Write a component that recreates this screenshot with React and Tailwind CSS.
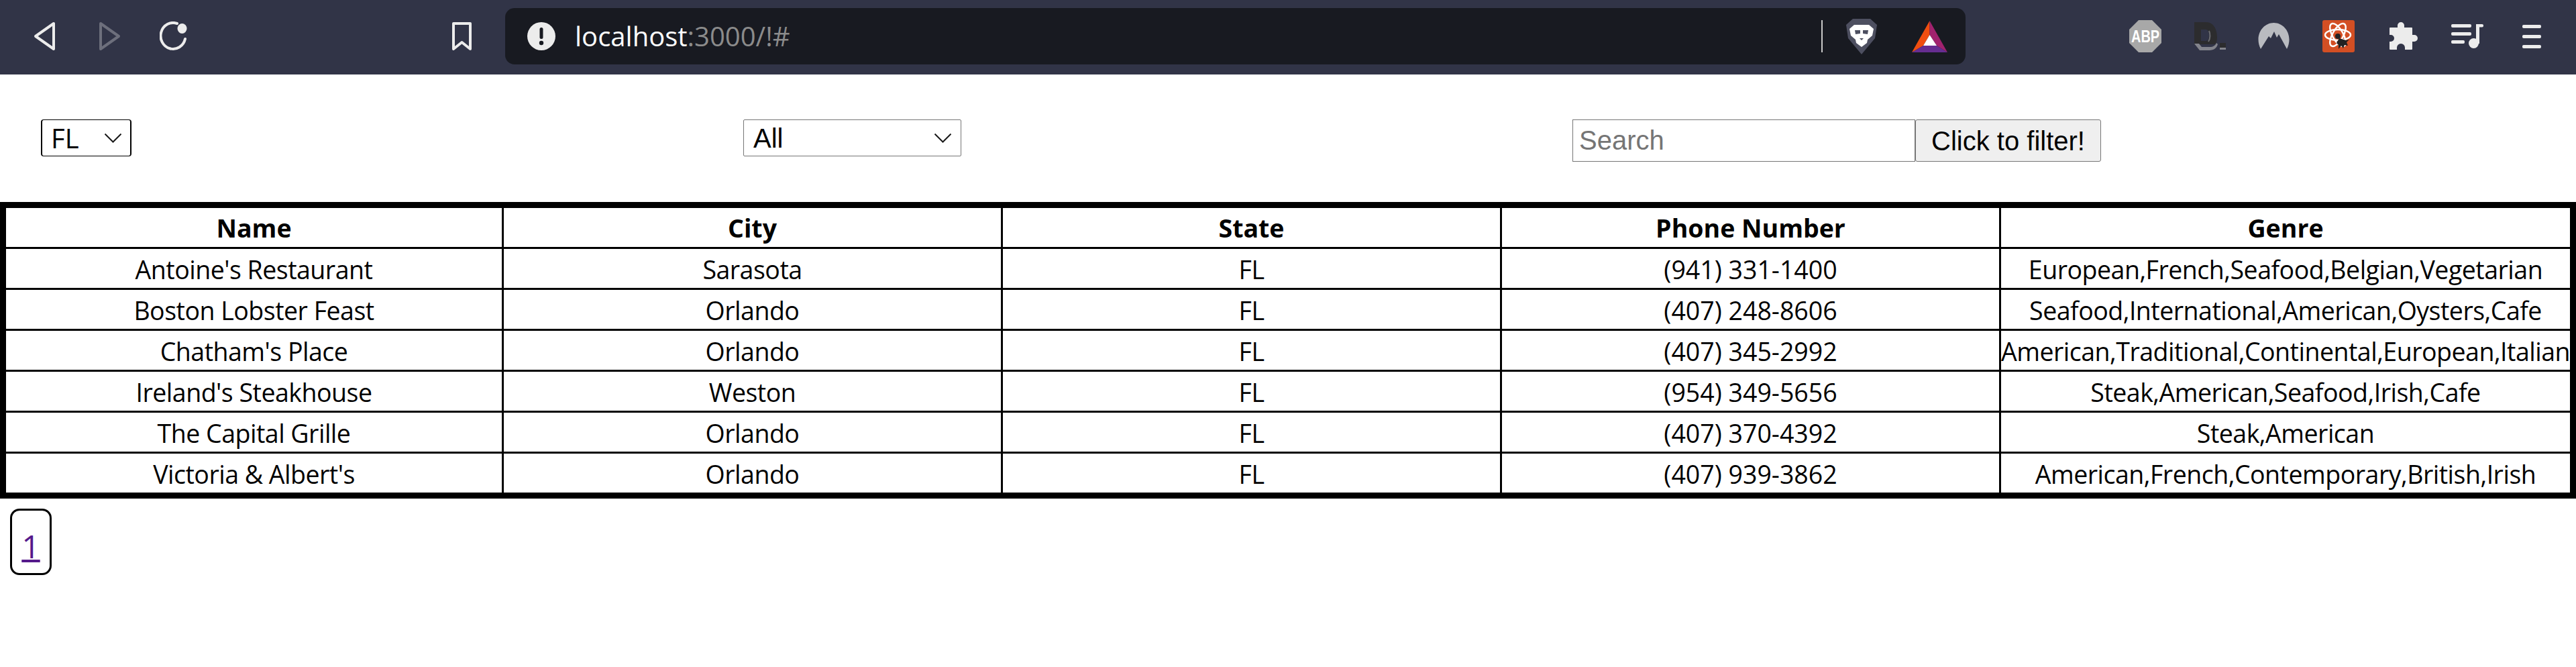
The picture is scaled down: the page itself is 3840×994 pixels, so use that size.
const restaurants = [
  ["Antoine's Restaurant", 'Sarasota', 'FL', '(941) 331-1400', 'European,French,Seafood,Belgian,Vegetarian'],
  ['Boston Lobster Feast', 'Orlando', 'FL', '(407) 248-8606', 'Seafood,International,American,Oysters,Cafe'],
  ["Chatham's Place", 'Orlando', 'FL', '(407) 345-2992', 'American,Traditional,Continental,European,Italian'],
  ["Ireland's Steakhouse", 'Weston', 'FL', '(954) 349-5656', 'Steak,American,Seafood,Irish,Cafe'],
  ['The Capital Grille', 'Orlando', 'FL', '(407) 370-4392', 'Steak,American'],
  ["Victoria & Albert's", 'Orlando', 'FL', '(407) 939-3862', 'American,French,Contemporary,British,Irish'],
];

const headers = ['Name', 'City', 'State', 'Phone Number', 'Genre'];

const colWidths = ['w-[742px]', 'w-[744px]', 'w-[744px]', 'w-[744px]', ''];

const Chevron = () => (
  <svg className="w-[25px] h-[14px]" viewBox="0 0 25 14" fill="none" stroke="#1a1a1a" strokeWidth="2">
    <path d="M0.5 0.5 L12.5 12.5 L24.5 0.5" />
  </svg>
);

const BrowserBar = () => (
  <div className="h-[111px] pb-[3px] bg-[#313447] flex items-center">
    <svg className="ml-[50px] w-[34px] h-[44px]" viewBox="0 0 34 44" fill="none" stroke="#ececec" strokeWidth="4" strokeLinejoin="round">
      <path d="M30 3 V41 L3 22 Z" />
    </svg>
    <svg className="ml-[62px] w-[34px] h-[44px]" viewBox="0 0 34 44" fill="none" stroke="#6d6f7c" strokeWidth="4" strokeLinejoin="round">
      <path d="M4 3 L31 22 L4 41 Z" />
    </svg>
    <svg className="ml-[58px] w-[44px] h-[44px]" viewBox="0 0 44 44" fill="none" stroke="#ececec" strokeWidth="4" strokeLinecap="round">
      <path d="M38 26 A18.5 19.5 0 1 1 26 3" />
      <ellipse cx="33.5" cy="10.5" rx="7" ry="7.5" fill="#ececec" stroke="none" />
    </svg>
    <svg className="ml-[391px] w-[31px] h-[44px]" viewBox="0 0 31 44" fill="none" stroke="#ececec" strokeWidth="4" strokeLinejoin="round">
      <path d="M3 3 H28 V41 L15.5 31 L3 41 Z" />
    </svg>

    <div className="ml-[49px] w-[2177px] h-[84px] bg-[#181a21] rounded-[14px] flex items-center">
      <svg className="ml-[33px] w-[42px] h-[42px]" viewBox="0 0 42 42">
        <circle cx="21" cy="21" r="21" fill="#ececec" />
        <rect x="18.5" y="8" width="5" height="17" rx="2.5" fill="#181a21" />
        <circle cx="21" cy="31" r="3.2" fill="#181a21" />
      </svg>
      <span className="ml-[29px] text-[40px] leading-none text-white font-['Open_Sans',sans-serif]">
        localhost<span className="text-[#8b8b8b]">:3000/!#</span>
      </span>

      <div className="ml-auto w-[2px] h-[48px] bg-[#c9c9c9]" />
      <svg className="ml-[35px] w-[46px] h-[54px]" viewBox="0 0 46 54">
        <path d="M10 1 H36 L46 10 L43 30 L23 54 L3 30 L0 10 Z" fill="#4d4f60" />
        <path d="M12 10 H34 L41 16 L39 26 L32 32 L31 37 L23 43 L15 37 L14 32 L7 26 L5 16 Z" fill="#fff" />
        <path d="M13 18 H21 V23 L14 24 Z M33 18 H25 V23 L32 24 Z M20 30 H26 L23 33 Z" fill="#4d4f60" />
      </svg>
      <svg className="ml-[52px] w-[53px] h-[47px]" viewBox="0 0 53 47">
        <path d="M26.5 0 L0 47 L17 37 L26.5 21 Z" fill="#f04e0f" />
        <path d="M26.5 0 L53 47 L37 37 L26.5 21 Z" fill="#a1226e" />
        <path d="M0 47 L17 37 H37 L53 47 Z" fill="#662d91" />
        <path d="M26.5 21 L17 37 H37 Z" fill="#fff" />
      </svg>
      <div className="w-[27px]" />
    </div>

    <svg className="ml-[244px] w-[48px] h-[48px]" viewBox="0 0 48 48">
      <path d="M14 0 H34 L48 14 V34 L34 48 H14 L0 34 V14 Z" fill="#a8a8a8" />
      <text transform="translate(3 33) scale(0.8 1)" fontSize="25" fontWeight="700" fill="#fff" fontFamily="Liberation Sans, sans-serif">ABP</text>
    </svg>
    <svg className="ml-[48px] w-[48px] h-[44px]" viewBox="0 0 48 44">
      <path d="M1 1 H18 C30 1 35 12 35 24 C35 29 34 32 32 34 H1 Z M11 12 V29 H18 C22 29 23 25 23 20 C23 15 21 12 18 12 Z" fill="#2c2c2e" fillRule="evenodd" />
      <path d="M23 14 C25 18 25 26 22 30" fill="none" stroke="#6b6c72" strokeWidth="2" />
      <path d="M1 33 H8 L12 38 H24 C29 38 32 36 34 32 L36 34 C34 40 30 43 24 43 H9 Z" fill="#83848c" />
      <rect x="39" y="32" width="9" height="7" fill="#2c2c2e" />
      <rect x="39" y="39" width="9" height="3" fill="#83848c" />
    </svg>
    <svg className="ml-[47px] w-[49px] h-[40px]" viewBox="0 0 49 40">
      <path d="M5 39 C-5 19 8 0 24.5 0 C41 0 54 19 44 39 L32 17 L29 22 L25 13 L20 23 L17 20 Z" fill="#b9bbc0" />
    </svg>
    <svg className="ml-[48px] w-[48px] h-[48px]" viewBox="0 0 48 48" fill="none">
      <rect width="48" height="48" rx="3" fill="#d34f24" />
      <g stroke="#fff" strokeWidth="2.5">
        <ellipse cx="23" cy="22" rx="19" ry="8" />
        <ellipse cx="23" cy="22" rx="19" ry="8" transform="rotate(60 23 22)" />
        <ellipse cx="23" cy="22" rx="19" ry="8" transform="rotate(120 23 22)" />
      </g>
      <circle cx="23" cy="24" r="4" fill="#222" />
      <path d="M25 27 L35 30 L40 29 L36 33 L38 38 L33 37 L31 42 L28 38 L24 43 L24 37 L21 34 Z" fill="#222" />
    </svg>
    <svg className="ml-[52px] w-[42px] h-[42px]" viewBox="0 0 42 42">
      <path d="M1 8 H12 V5 A5 5 0 0 1 22 5 V8 H33 Q34 8 34 9 V19 H37 A5 5 0 0 1 37 29 H34 V40 Q34 41 33 41 H23 V38 A6 6 0 0 0 11 38 V41 H1 Q0 41 0 40 V29 H2 A5 5 0 0 0 2 19 H0 V9 Q0 8 1 8 Z" fill="#ececec" />
    </svg>
    <svg className="ml-[50px] w-[48px] h-[36px]" viewBox="0 0 48 36" fill="#ececec">
      <rect y="0" width="30" height="5" rx="2" />
      <rect y="12" width="30" height="5" rx="2" />
      <rect y="24" width="20" height="5" rx="2" />
      <rect x="37" y="0" width="5" height="29" />
      <rect x="37" y="0" width="11" height="4.5" rx="2" />
      <circle cx="33.5" cy="28.5" r="7.5" />
    </svg>
    <div className="ml-[58px] w-[28px] flex flex-col gap-[10px]">
      <div className="h-[5px] rounded-[2px] bg-[#ececec]" />
      <div className="h-[5px] rounded-[2px] bg-[#ececec]" />
      <div className="h-[5px] rounded-[2px] bg-[#ececec]" />
    </div>
  </div>
);

const FilterBar = () => (
  <div className="h-[190px] pt-[67px] flex items-start font-['Liberation_Sans',sans-serif] text-[40px] text-black">
    <div className="ml-[61px] w-[135px] h-[55px] border-x-2 border-y border-black rounded-[4px] flex items-center justify-between pl-[13px] pr-[13px] font-['Open_Sans',sans-serif]">
      <span>FL</span>
      <Chevron />
    </div>
    <div className="ml-[912px] w-[325px] h-[55px] border border-[#767676] rounded-[2px] flex items-center justify-between pl-[14px] pr-[14px]">
      <span>All</span>
      <Chevron />
    </div>
    <input
      placeholder="Search"
      className="ml-[911px] w-[511px] h-[63px] border border-[#767676] px-[9px] placeholder:text-[#757575] outline-none"
    />
    <button className="w-[277px] h-[63px] border border-[#767676] rounded-[3px] bg-[#efefef]">
      Click to filter!
    </button>
  </div>
);

const App = () => (
  <div className="min-h-[994px] bg-white font-['Open_Sans',sans-serif] text-black">
    <BrowserBar />
    <FilterBar />
    <table className="w-full table-fixed border-separate border-spacing-0 border-[9px] border-black text-[37.5px] text-center">
      <thead>
        <tr>
          {headers.map((h, i) => (
            <th key={h} className={`${colWidths[i]} h-[58px] p-0 pt-[1px] font-bold leading-[52px] border-black ${i < 4 ? 'border-r-[3px]' : ''}`}>{h}</th>
          ))}
        </tr>
      </thead>
      <tbody>
        {restaurants.map((row) => (
          <tr key={row[0]}>
            {row.map((cell, i) => (
              <td key={i} className={`h-[61px] p-0 pt-[3px] leading-[52px] whitespace-nowrap border-black border-t-[3px] ${i < 4 ? 'border-r-[3px]' : ''} ${i === 3 ? '' : 'tracking-[-0.5px]'}`}>{cell}</td>
            ))}
          </tr>
        ))}
      </tbody>
    </table>
    <div className="mt-[15px] ml-[15px] w-[62px] h-[99px] border-[3px] border-black rounded-[14px] flex items-end justify-center pb-[12px]">
      <a href="#" className="text-[48px] leading-[56px] text-[#551a8b] underline decoration-[4px] underline-offset-[2px] font-['Open_Sans',sans-serif]">1</a>
    </div>
  </div>
);

export default App;
